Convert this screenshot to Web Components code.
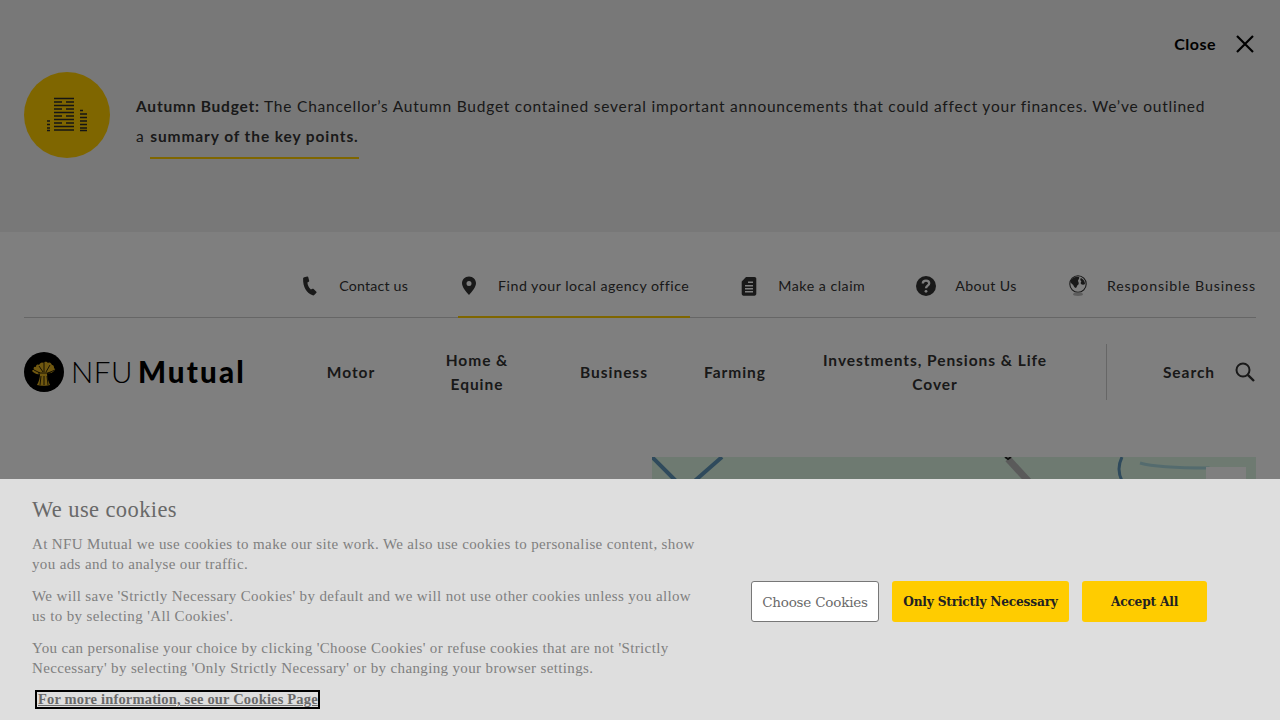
<!DOCTYPE html>
<html lang="en"><head><meta charset="utf-8"><title>NFU Mutual</title>
<style>
html,body{margin:0;height:720px;overflow:hidden;background:#fff}
body{font-family:Lato,"Noto Sans",sans-serif;position:relative}
</style></head><body>
<nfu-page>
  <nfu-banner></nfu-banner>
  <nfu-utility>
    <nfu-util icon="phone" style="letter-spacing:.2px;margin-right:-1px">Contact us</nfu-util>
    <nfu-util icon="pin" active style="margin-right:-2px">Find your local agency office</nfu-util>
    <nfu-util icon="doc" style="letter-spacing:.5px">Make a claim</nfu-util>
    <nfu-util icon="help" style="letter-spacing:.4px">About Us</nfu-util>
    <nfu-util icon="globe" style="letter-spacing:.85px">Responsible Business</nfu-util>
  </nfu-utility>
  <nfu-mainnav></nfu-mainnav>
  <nfu-map></nfu-map>
</nfu-page>
<nfu-overlay></nfu-overlay>
<nfu-cookies></nfu-cookies>
<script>
const def=(name,html)=>customElements.define(name,class extends HTMLElement{
  connectedCallback(){ if(this.shadowRoot) return; const r=this.attachShadow({mode:'open'}); r.innerHTML=typeof html==='function'?html(this):html; }
});
const ICONS={
 phone:'<svg width="18" height="20" viewBox="0 0 18 20"><path fill="#333" d="M3.200 1.200 6.200.4c.5-.1.9.1 1 .6l1 3.700c.1.4 0 .8-.4 1L6.400 6.600c.2 2.700 1.400 5 3.500 7l1.600-.8c.4-.2.800-.1 1.100.2l2.800 2.700c.3.300.3.800 0 1.100l-1.900 2c-.5.500-1.200.7-1.900.5C5.600 17.300 1.800 11 2.100 2.500c0-.6.500-1.100 1.100-1.300z"/></svg>',
 pin:'<svg width="16" height="20" viewBox="0 0 16 20"><path fill="#333" fill-rule="evenodd" d="M8 .5C3.900.5 1 3.600 1 7.300c0 4 4.300 8.700 7 11.700 2.700-3 7-7.700 7-11.700C15 3.600 12.100.5 8 .5zm0 4.400a2.500 2.500 0 1 1 0 5 2.500 2.500 0 0 1 0-5z"/></svg>',
 doc:'<svg width="16" height="20" viewBox="0 0 16 20"><path fill="#333" fill-rule="evenodd" d="M5 1h8.500C14.600 1 15.300 1.700 15.300 2.800v15c0 1.100-.7 1.900-1.800 1.900H2.500C1.400 19.700.7 18.900.7 17.800V5.400zM4 9v1.500h8V9zm0 3v1.500h8V12zm0 3v1.500h8V15zM7 5.500V7h5V5.500z"/></svg>',
 help:'<svg width="20" height="20" viewBox="0 0 20 20"><circle cx="10" cy="10" r="10" fill="#333"/><path fill="none" stroke="#fff" stroke-width="2.300" d="M6.800 7.600c0-1.900 1.400-3 3.200-3 1.900 0 3.200 1.100 3.200 2.700 0 2.400-3.200 2.400-3.200 5"/><circle cx="10" cy="15.300" r="1.400" fill="#fff"/></svg>',
 globe:'<svg width="20" height="22" viewBox="0 0 20 22"><circle cx="10" cy="9" r="8.200" fill="#fff" stroke="#333" stroke-width="1.100"/><path fill="#333" d="M3 5c2-3 6-4 8-3 1 1-1 3-1 4 1 2 1 3 0 4-1 0-1 2-2 3C6 13 6 10 4 9 3 8 2 7 3 5zm10-2c2 1 4 3 4 6-1 1-3 1-4 0-1-2 1-2 0-3-1-1-1-2 0-3z"/><ellipse cx="10" cy="19.300" rx="5" ry="1.700" fill="#bbb"/></svg>'
};
def('nfu-page',`<style>:host{display:block;height:720px;overflow:hidden}</style><slot></slot>`);
def('nfu-overlay',`<style>:host{display:block;position:absolute;inset:0;background:rgba(0,0,0,.5)}</style>`);
def('nfu-banner',`<style>
:host{display:block;height:232px;box-sizing:border-box;background:#f0f0f0;padding:32px 24px 0;color:#333;font:400 15.500px/30px Lato,sans-serif;letter-spacing:.775px}
.close{display:flex;justify-content:flex-end;align-items:center;height:24px;gap:20px;padding-right:2px;color:#000;font-weight:700;letter-spacing:.5px;font-size:16px}
.row{display:flex;gap:26px;margin-top:16px;padding-right:20px}
.circle{flex:none;width:86px;height:86px;border-radius:50%;background:#ffcc00;display:flex;align-items:center;justify-content:center}
p{margin:19px 0 0;white-space:nowrap}
b{font-weight:700}
a{color:inherit;font-weight:700;text-decoration:none;display:inline-block;border-bottom:2px solid #ffcc00;height:36px;vertical-align:top;margin-left:1px;letter-spacing:.9px}
</style>
<div class="close"><span>Close</span><svg width="18" height="18" viewBox="0 0 18 18"><path d="M1 1l16 16M17 1 1 17" stroke="#000" stroke-width="2.200" fill="none"/></svg></div>
<div class="row"><div class="circle"><svg width="42" height="36" viewBox="0 0 42 36"><g stroke="#2a2a2a" stroke-width="1.600" fill="none"><path d="M8 1.500h20M8 5h8M20 5h8M8 8.500h20M8 12h8M20 12h8M8 15.500h20M8 19h8M20 19h8M8 22.500h20M8 26h8M20 26h8M8 29.500h20M8 33h20M34 13.500h3M34 17h7M34 20.500h7M34 24h7M34 27.500h7M34 31h7M34 33.500h7M1 24h3M1 27.500h3M1 31h3M1 33.500h3"/></g></svg></div>
<p><b>Autumn Budget:</b> The Chancellor’s Autumn Budget contained several important announcements that could affect your finances. We’ve outlined<br>a <a href="#">summary of the key points.</a></p></div>`);
def('nfu-utility',`<style>:host{display:flex;justify-content:flex-end;gap:51px;height:86px;margin:0 24px;box-sizing:border-box;border-bottom:1px solid #ccc}</style><slot></slot>`);
def('nfu-util',el=>`<style>
:host{display:flex;align-items:center;height:86px;box-sizing:border-box;padding:22px ${el.hasAttribute('active')?'1px':'0'} 0;color:#333;font:400 14.200px/20px Lato,sans-serif;letter-spacing:.5px;${el.hasAttribute('active')?'box-shadow:inset 0 -2px 0 #ffcc00;':''}white-space:nowrap}
.i{display:flex;justify-content:center;width:20px;margin-right:19px}
</style><span class="i">${ICONS[el.getAttribute('icon')]}</span><slot></slot>`);
def('nfu-mainnav',`<style>
:host{display:flex;align-items:center;height:108px;box-sizing:border-box;padding:0 24px;color:#333;font:700 15.500px/24px Lato,sans-serif;letter-spacing:.95px}
.logo{width:276px;flex:none;display:flex;align-items:center;gap:7px;color:#000}
.t{font-size:29.500px;line-height:40px;letter-spacing:.5px;white-space:nowrap}
.t i{font-style:normal;font-weight:300}.t b{font-weight:900;margin-left:5px;letter-spacing:2.200px}
.n{flex:none;text-align:center;box-sizing:border-box}
.d{width:1px;height:56px;background:#ccc;margin-left:30px;flex:none}
.s{margin-left:auto;display:flex;align-items:center;gap:20px;padding-right:1px}
</style>
<div class="logo"><svg width="40" height="40" viewBox="0 0 40 40"><circle cx="20" cy="20" r="20" fill="#000"/><path fill="#e0b020" d="M13 33c2-4 3-7 3-11-3 1-6-1-8-3 0-1 1-1 2-1-1-2 0-4 2-3 0-2 1-3 3-2 1-2 3-3 4-2 2-2 4-1 5 0 2-1 3 0 4 2 2 0 2 2 2 3 1 1 2 2 0 3-2 2-5 3-7 2 0 4 1 8 3 12-2 1-10 1-13 0z"/><path stroke="#000" stroke-width=".8" fill="none" d="M14 21h13M17 24l-1 9M20 24v9M23 24l1 9M15 14l4 6M20 10v10M26 13l-4 7M10 18l6 3M31 18l-7 3"/></svg>
<span class="t"><i>NFU</i><b>Mutual</b></span></div>
<div class="n" style="width:102px">Motor</div>
<div class="n" style="width:150px;padding:0 40px">Home &amp; Equine</div>
<div class="n" style="width:124px">Business</div>
<div class="n" style="width:118px">Farming</div>
<div class="n" style="width:282px;padding:0 24px">Investments, Pensions &amp; Life Cover</div>
<div class="d"></div>
<div class="s"><span>Search</span><svg width="20" height="20" viewBox="0 0 20 20"><circle cx="8" cy="8" r="6.500" fill="none" stroke="#333" stroke-width="2"/><path d="M12.800 12.800 19 19" stroke="#333" stroke-width="2.400"/></svg></div>`);
def('nfu-map',`<style>:host{display:block;margin:31px 24px 0 auto;width:604px;height:260px;background:#dcf5e3;overflow:hidden}svg{display:block}
</style><svg width="604" height="260" viewBox="0 0 604 260"><path d="M0 0l24 24M70 0 38 28" stroke="#5f94b8" stroke-width="4" fill="none"/><path d="M356 2l24 26" stroke="#b5b5b5" stroke-width="7" fill="none"/><path d="M353 0l3 2 3-2" stroke="#222" stroke-width="2" fill="none"/><path d="M470 0c-4 8-4 16 0 24" stroke="#5f94b8" stroke-width="3" fill="none"/><path d="M488 6c14 4 36 5 68 5v12" stroke="#a9d7dc" stroke-width="3" fill="none"/><rect x="554" y="10" width="40" height="20" fill="#fff"/></svg>`);
def('nfu-cookies',`<style>
:host{display:flex;position:absolute;left:0;right:0;bottom:0;height:241px;box-sizing:border-box;background:#dedede;padding:18px 32px 0;color:#808080;font:400 15px/20px "Liberation Serif",serif;letter-spacing:.36px}
.l{width:668px;flex:none}
h2{margin:0 0 11px;font:400 22.500px/26px "Liberation Serif",serif;color:#696969;letter-spacing:.4px}
p{margin:0 0 12px}
p:last-of-type{margin-bottom:11px}
a{display:inline-block;margin:0 0 0 4px;padding:0 0 0 1px;outline:1px solid #000;border:1px solid #000;color:#696969;font-size:14.500px;letter-spacing:.17px;font-weight:700;line-height:15px;height:15px;white-space:nowrap}
.b{margin:84px 0 0 51px;display:flex;gap:13px;align-items:flex-start}
button{height:41px;box-sizing:border-box;border-radius:3px;border:0;background:#ffcc00;color:#222;font:700 12.200px "DejaVu Serif",serif;letter-spacing:-.2px;padding:0;white-space:nowrap}
.w{background:#fff;border:1px solid #777;color:#6a6a6a;font-weight:400;width:128px;font-size:13.500px;letter-spacing:-.2px}
</style>
<div class="l"><h2>We use cookies</h2>
<p>At NFU Mutual we use cookies to make our site work. We also use cookies to personalise content, show you ads and to analyse our traffic.</p>
<p>We will save 'Strictly Necessary Cookies' by default and we will not use other cookies unless you allow us to by selecting 'All Cookies'.</p>
<p>You can personalise your choice by clicking 'Choose Cookies' or refuse cookies that are not 'Strictly Neccessary' by selecting 'Only Strictly Necessary' or by changing your browser settings.</p>
<a href="#">For more information, see our Cookies Page</a></div>
<div class="b"><button class="w">Choose Cookies</button><button style="width:177px">Only Strictly Necessary</button><button style="width:125px">Accept All</button></div>`);
</script>
</body></html>
